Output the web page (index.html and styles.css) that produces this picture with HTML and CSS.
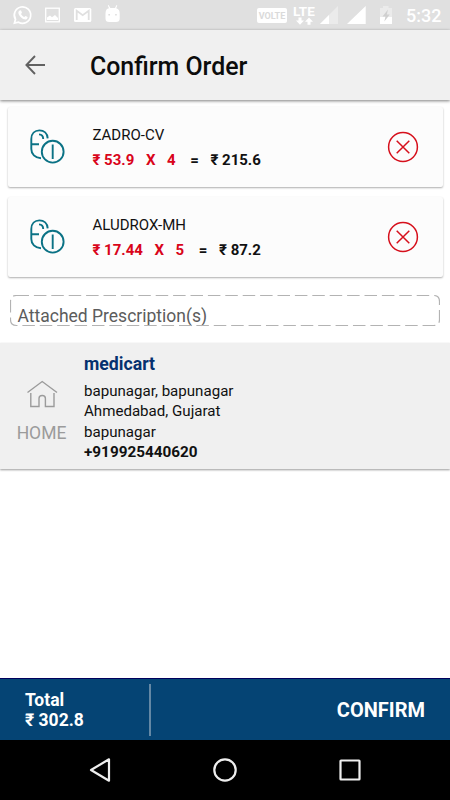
FILE: index.html
```html
<!DOCTYPE html>
<html lang="en">
<head>
    <meta charset="UTF-8">
    <meta name="viewport" content="width=device-width, initial-scale=1.0">
    <title>Confirm Order</title>
    <link rel="stylesheet" href="styles.css">
</head>
<body>
    <!-- Shared icons -->
    <svg class="defs" width="0" height="0">
        <symbol id="pills" viewBox="0 0 40 40">
            <path d="M13 31.3C7 31 3.3 27 3.3 22V12C3.3 6.5 6.8 3.4 11.4 3.4C16 3.4 19.3 6.5 19.7 11.3M3.3 17.2H11M11 7.4C13.8 7.6 15.2 9.2 15.2 12M24.7 17.5V32"/>
            <circle cx="24.7" cy="24.7" r="10.9"/>
        </symbol>
        <symbol id="remove" viewBox="0 0 32 32">
            <circle cx="16" cy="16" r="14.4"/>
            <path d="M9.7 9.7L22.3 22.3M22.3 9.7L9.7 22.3"/>
        </symbol>
    </svg>

    <div class="status-bar">
        <svg class="notifications" width="130" height="30" viewBox="0 0 130 30">
            <path d="M14.4 23.2L15.5 19.3A8.2 8.2 0 1 1 18.5 22.2Z" fill="none" stroke="#fff" stroke-width="1.7"/>
            <path d="M19.3 10.8C20 10 21 10.1 21.2 10.8L21.9 12.4C22 13 21.2 13.5 21 14C21.8 15.6 22.9 16.4 24.2 17C24.8 16.8 25.1 15.9 25.7 16L27.5 16.9C28 17.4 27.2 19 26 19.4C23.5 20 18.4 16 18.4 12.7C18.4 12 18.9 11.2 19.3 10.8Z" fill="#fff"/>
            <rect x="45.7" y="8.2" width="13.6" height="13.6" fill="none" stroke="#fff" stroke-width="1.3"/>
            <path d="M47 20V17.5L50 15.5L52 17.3L55 15L58 18V20Z" fill="#fff"/>
            <rect x="74" y="8" width="17.3" height="14" rx="1.5" fill="#fff"/>
            <path d="M76.700 20V10.800L82.700 15.200L88.700 10.800V20" fill="none" stroke="#e0e0e0" stroke-width="1.800"/>
            <path d="M105.5 13.5Q105.5 8.7 109 8.2L107.8 5.6L108.6 5.1L110.3 8H115L116.5 5L117.3 5.5L116.2 8.2Q119.7 9 119.7 13.5V18.5Q119.7 22 116 22H109.2Q105.5 22 105.5 18.5Z" fill="#fff"/>
            <path d="M108.4 14h1.5v1.5h-1.5zM115.2 14h1.5v1.5h-1.5z" fill="#dcdcdc"/>
        </svg>
        <div class="system">
            <span class="volte">VOLTE</span>
            <div class="lte">
                <span>LTE</span>
                <svg width="20" height="9" viewBox="0 0 20 9">
                    <path d="M4.500 .5h3v3h2.500l-4 4.300l-4-4.300h2.500zM13.500 7.700h3v-3H19L15 .4l-4 4.300h2.500z" fill="#fff"/>
                </svg>
            </div>
            <svg class="signals" width="80" height="30" viewBox="0 0 80 30">
                <path d="M1 24L19 6V24Z" fill="#ebebeb"/>
                <path d="M1 24L10 15V24Z" fill="#fff"/>
                <path d="M28 24L46.7 6V24Z" fill="#fff"/>
                <path d="M61 8H64V6H69.500V8H73V17H61Z" fill="#ebebeb"/>
                <path d="M61 17H73V24H61Z" fill="#fff"/>
                <path d="M69 9.500L63.500 16.500H66.500L65.300 21.500L70.800 14.500H67.800Z" fill="#d0d0d0"/>
            </svg>
            <span class="time">5:32</span>
        </div>
    </div>

    <header class="toolbar">
        <svg width="20" height="20" viewBox="0 0 20 20">
            <path d="M10 1L1.400 10L10 19M1.500 10H20" fill="none" stroke="#616161" stroke-width="1.900"/>
        </svg>
        <h1>Confirm Order</h1>
    </header>

    <main>
        <div class="card">
            <svg class="pills"><use href="#pills"/></svg>
            <div class="details">
                <div class="name">ZADRO-CV</div>
                <div class="price">
                    <span class="red">₹ 53.9</span>
                    <span class="red">X</span>
                    <span class="red">4</span>
                    <span class="equals">=</span>
                    <span>₹ 215.6</span>
                </div>
            </div>
            <svg class="remove"><use href="#remove"/></svg>
        </div>

        <div class="card">
            <svg class="pills"><use href="#pills"/></svg>
            <div class="details">
                <div class="name">ALUDROX-MH</div>
                <div class="price">
                    <span class="red">₹ 17.44</span>
                    <span class="red">X</span>
                    <span class="red">5</span>
                    <span class="equals">=</span>
                    <span>₹ 87.2</span>
                </div>
            </div>
            <svg class="remove"><use href="#remove"/></svg>
        </div>

        <div class="prescriptions">
            <svg class="dashes" width="430" height="32" viewBox="0 0 430 32">
                <path d="M6.500 .5H423.500Q429.500 .5 429.500 6.500V24.500Q429.500 30.500 423.500 30.500H6.500Q.5 30.500 .5 24.500V6.500Q.5 .5 6.500 .5Z"/>
            </svg>
            <span>Attached Prescription(s)</span>
        </div>

        <section class="address">
            <div class="place">
                <svg width="32" height="30" viewBox="0 0 32 30">
                    <path d="M1.500 13.500L16.200 2.500L31 13.500M4.800 14V27.500H13V19.500Q13 16.500 16.200 16.500Q19.400 16.500 19.400 19.500V27.500H28V14" fill="none" stroke="#9b9b9b" stroke-width="1.400"/>
                </svg>
                <span>HOME</span>
            </div>
            <div class="lines">
                <h2>medicart</h2>
                <p>bapunagar, bapunagar</p>
                <p>Ahmedabad, Gujarat</p>
                <p>bapunagar</p>
                <p class="phone">+919925440620</p>
            </div>
        </section>
    </main>

    <footer class="total-bar">
        <div class="total">
            <div>Total</div>
            <div>₹ 302.8</div>
        </div>
        <button type="button">CONFIRM</button>
    </footer>

    <nav class="nav-bar">
        <svg width="24" height="26" viewBox="0 0 24 26">
            <path d="M3 13L21 2.300V23.700Z"/>
        </svg>
        <svg width="26" height="26" viewBox="0 0 26 26">
            <circle cx="13" cy="13" r="10.700"/>
        </svg>
        <svg width="24" height="26" viewBox="0 0 24 26">
            <rect x="2.500" y="3.500" width="19" height="19" rx=".5"/>
        </svg>
    </nav>
</body>
</html>
```
FILE: styles.css
```css
* {
    box-sizing: border-box;
}
body {
    margin: 0;
    width: 450px;
    height: 800px;
    display: flex;
    flex-direction: column;
    overflow: hidden;
    font-family: Roboto, "Liberation Sans", sans-serif;
    background-color: #fff;
    color: #111;
}
svg {
    display: block;
    flex-shrink: 0;
}
h1, h2, p {
    margin: 0;
}
.defs {
    position: absolute;
}

/* Android status bar */
.status-bar {
    height: 30px;
    flex-shrink: 0;
    display: flex;
    justify-content: space-between;
    background-color: #e0e0e0;
    color: #fff;
}
.system {
    display: flex;
    align-items: center;
    padding-right: 9px;
}
.volte {
    width: 30px;
    height: 15px;
    border-radius: 2px;
    background-color: #fff;
    color: #dadada;
    font-size: 9px;
    font-weight: 700;
    line-height: 16px;
    text-align: center;
}
.lte {
    width: 22px;
    margin-left: 6px;
    font-size: 13.5px;
    font-weight: 700;
    line-height: 13px;
}
.lte svg {
    margin-left: 1px;
    margin-top: -1px;
}
.signals {
    margin-left: 4px;
}
.time {
    width: 35px;
    margin-left: 7px;
    font-size: 18px;
    font-weight: 500;
    white-space: nowrap;
    line-height: 30px;
    padding-top: 1px;
}

.toolbar {
    height: 70px;
    flex-shrink: 0;
    display: flex;
    align-items: center;
    padding-left: 25px;
    background-color: #f0f0f0;
    box-shadow: 0 1px 3px rgba(0, 0, 0, 0.5);
}
.toolbar h1 {
    margin-left: 45px;
    padding-top: 2px;
    font-size: 24.9px;
    font-weight: 500;
    color: #0c0c0c;
}

main {
    flex: 1;
    padding-top: 7px;
}
.card {
    height: 80px;
    margin: 0 7.5px 10px;
    padding: 0 24px 0 20px;
    display: flex;
    align-items: center;
    border-radius: 2px;
    background-color: #fcfcfc;
    box-shadow: 0 1px 2px rgba(0, 0, 0, 0.32);
}
.pills {
    width: 40px;
    height: 40px;
    fill: none;
    stroke: #0b7285;
    stroke-width: 1.9;
}
.details {
    flex: 1;
    margin-left: 25px;
}
.name {
    font-size: 15px;
    line-height: 26px;
}
.price {
    display: flex;
    gap: 11.6px;
    font-size: 15px;
    font-weight: 700;
    line-height: 25px;
    white-space: nowrap;
}
.red {
    color: #d9041a;
}
.equals {
    margin-left: 3px;
}
.remove {
    width: 32px;
    height: 32px;
    fill: none;
    stroke: #d6101c;
    stroke-width: 1.5;
}

.prescriptions {
    position: relative;
    height: 32px;
    margin: 18px 10px 0;
    padding-left: 7.5px;
    font-size: 17.5px;
    line-height: 42px;
    color: #5c5c5c;
}
.dashes {
    position: absolute;
    left: 0;
    top: 0;
    fill: none;
    stroke: #b3b3b3;
    stroke-width: 1.2;
    stroke-dasharray: 12.5 4.9;
}

.address {
    height: 126px;
    margin-top: 16px;
    display: flex;
    background-color: #f0f0f0;
    box-shadow: 0 1px 2px rgba(0, 0, 0, 0.4);
}
.place {
    width: 84px;
    padding-top: 36px;
    padding-right: 1px;
    display: flex;
    flex-direction: column;
    align-items: center;
    gap: 12.5px;
    font-size: 17.5px;
    line-height: 22px;
    color: #9b9b9b;
}
.lines {
    padding-top: 10px;
    font-size: 15.1px;
    line-height: 20.4px;
}
.lines h2 {
    margin-bottom: 6px;
    font-size: 17.7px;
    font-weight: 700;
    line-height: 22px;
    color: #05316f;
}
.phone {
    font-size: 15.3px;
    font-weight: 700;
}

.total-bar {
    height: 62px;
    flex-shrink: 0;
    display: flex;
    align-items: center;
    justify-content: space-between;
    padding: 0 25px;
    border-top: 1px solid #00005c;
    background-color: #054474;
    color: #fff;
}
.total {
    width: 126px;
    height: 52px;
    padding-top: 6px;
    border-right: 2px solid #6488a5;
    font-size: 17.5px;
    font-weight: 700;
    line-height: 20.5px;
}
.total-bar button {
    padding: 0;
    border: none;
    background: none;
    color: #fff;
    font-family: inherit;
    font-size: 20px;
    font-weight: 700;
}

.nav-bar {
    height: 60px;
    flex-shrink: 0;
    display: flex;
    align-items: center;
    justify-content: space-between;
    padding: 0 88px;
    background-color: #000;
}
.nav-bar svg {
    fill: none;
    stroke: #eee;
    stroke-width: 2.2;
    stroke-linejoin: round;
}
```
